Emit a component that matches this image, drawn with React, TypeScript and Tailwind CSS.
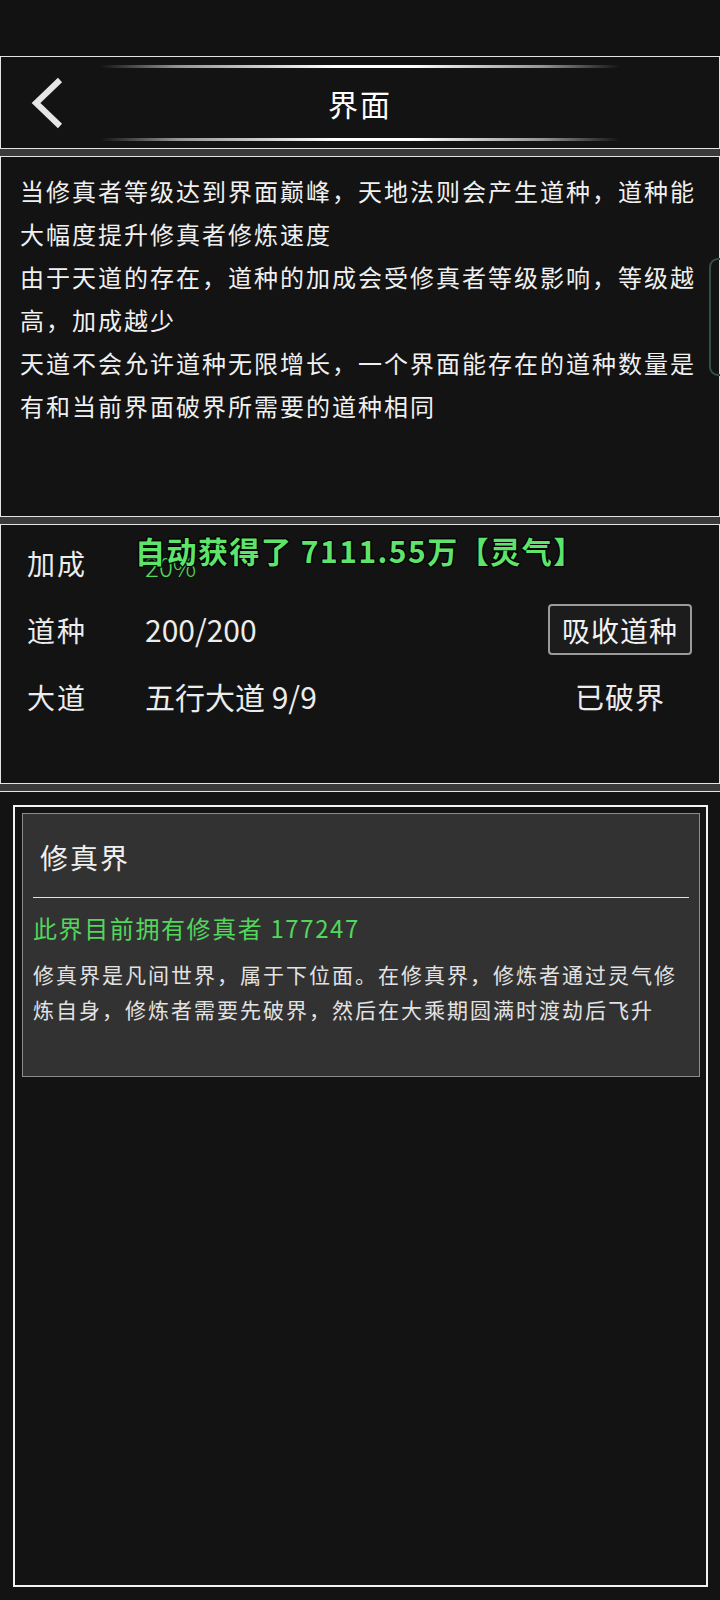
import React from "react";

const intro = [
  ["当修真者等级达到界面巅峰，天地法则会产生道种，道种能", "大幅度提升修真者修炼速度"],
  ["由于天道的存在，道种的加成会受修真者等级影响，等级越", "高，加成越少"],
  ["天道不会允许道种无限增长，一个界面能存在的道种数量是", "有和当前界面破界所需要的道种相同"],
];

function GlowLine() {
  return (
    <div className="mx-auto h-[3px] w-[520px] bg-[linear-gradient(to_right,transparent,rgba(255,255,255,0.55)_15%,#ffffff_45%,#ffffff_60%,rgba(255,255,255,0.55)_85%,transparent)]" />
  );
}

function BackIcon() {
  return (
    <svg width="36" height="52" viewBox="0 0 36 52" fill="none">
      <polyline
        points="32,3 8,26 32,49"
        stroke="#e6e6e6"
        strokeWidth="6"
        strokeLinecap="butt"
        strokeLinejoin="miter"
      />
    </svg>
  );
}

function StatRow({
  label,
  value,
  right,
}: {
  label: string;
  value: React.ReactNode;
  right?: React.ReactNode;
}) {
  return (
    <div className="flex h-[67px] items-center pl-[26px] pr-[27px]">
      <span className="w-[118px] text-[28px] tracking-[2px] text-[#ececec]">
        {label}
      </span>
      <div className="flex-1">{value}</div>
      <div className="flex w-[144px] justify-center">{right}</div>
    </div>
  );
}

export default function App() {
  return (
    <div className="flex h-[1600px] w-[720px] flex-col overflow-hidden bg-[#121212] font-['Noto_Sans_CJK_SC','Noto_Sans',sans-serif] text-[#ececec]">
      {/* status bar */}
      <div className="h-[56px] shrink-0" />

      {/* header */}
      <header className="box-border flex h-[93px] shrink-0 flex-col border border-[#e4e4e4] bg-[#131313] pb-[7px] pt-[8px]">
        <GlowLine />
        <div className="flex flex-1 items-center px-[27px]">
          <button className="flex w-[40px] items-center">
            <BackIcon />
          </button>
          <h1 className="flex-1 text-center text-[30px] tracking-[2px] text-white">
            界面
          </h1>
          <div className="w-[40px]" />
        </div>
        <GlowLine />
      </header>

      <div className="h-[7px] shrink-0 bg-[#3a3a3a]" />

      {/* intro */}
      <section className="relative box-border h-[361px] shrink-0 border border-[#e4e4e4] bg-[#131313] pl-[19px] pt-[12px] text-[24px] leading-[43px] tracking-[2px] text-[#f0f0f0]">
        {intro.map((para, i) => (
          <p key={i}>
            {para[0]}
            <br />
            {para[1]}
          </p>
        ))}
        <div className="absolute right-[-14px] top-[101px] h-[118px] w-[24px] rounded-[9px] border-2 border-[#33504a]" />
      </section>

      <div className="h-[7px] shrink-0 bg-[#3a3a3a]" />

      {/* stats */}
      <section className="relative box-border h-[260px] shrink-0 border border-[#e4e4e4] bg-[#131313] pt-[4px]">
        <StatRow
          label="加成"
          value={
            <span className="relative top-[3px] text-[26px] font-light text-[#52d65c]">
              20%
            </span>
          }
        />
        <StatRow
          label="道种"
          value={<span className="text-[30px]">200/200</span>}
          right={
            <button className="h-[51px] w-[144px] rounded-[4px] border-2 border-[#9a9a9a] bg-[#1c1c1c] text-[28px] tracking-[1px] text-[#f2f2f2]">
              吸收道种
            </button>
          }
        />
        <StatRow
          label="大道"
          value={<span className="text-[30px]">五行大道 9/9</span>}
          right={<span className="text-[29px] tracking-[1px]">已破界</span>}
        />

        {/* toast */}
        <div className="absolute left-[134px] top-[7px] whitespace-nowrap text-[30px] font-bold leading-[36px] tracking-[1.5px] text-[#5fe46b] [text-shadow:-1px_-1px_0_#000,1px_-1px_0_#000,-1px_1px_0_#000,1px_1px_0_#000,0_0_2px_#000]">
          自动获得了 7111.55万【灵气】
        </div>
      </section>

      <div className="h-[7px] shrink-0 bg-[#3a3a3a]" />

      {/* realm list */}
      <section className="flex flex-1 flex-col border-t border-[#e4e4e4] bg-[#131313] pb-[13px] pl-[13px] pr-[12px] pt-[13px]">
        <div className="flex-1 border-2 border-[#f2f2f2] bg-[#131313] pl-[7px] pr-[6px] pt-[6px]">
          <div className="box-border h-[264px] border border-[#8c8c8c] bg-[#323232]">
            <div className="flex h-[83px] items-center pl-[17px] pt-[2px] text-[28px] tracking-[2px] text-[#f0f0f0]">
              修真界
            </div>
            <div className="mx-[10px] h-px bg-[#e0e0e0]" />
            <div className="px-[10px] pt-[13px]">
              <p className="text-[24px] leading-[34px] tracking-[1.6px] text-[#52d65c]">
                此界目前拥有修真者 177247
              </p>
              <p className="mt-[12px] text-[21px] leading-[35px] tracking-[2px] text-[#e2e2e2]">
                修真界是凡间世界，属于下位面。在修真界，修炼者通过灵气修
                <br />
                炼自身，修炼者需要先破界，然后在大乘期圆满时渡劫后飞升
              </p>
            </div>
          </div>
        </div>
      </section>
    </div>
  );
}
